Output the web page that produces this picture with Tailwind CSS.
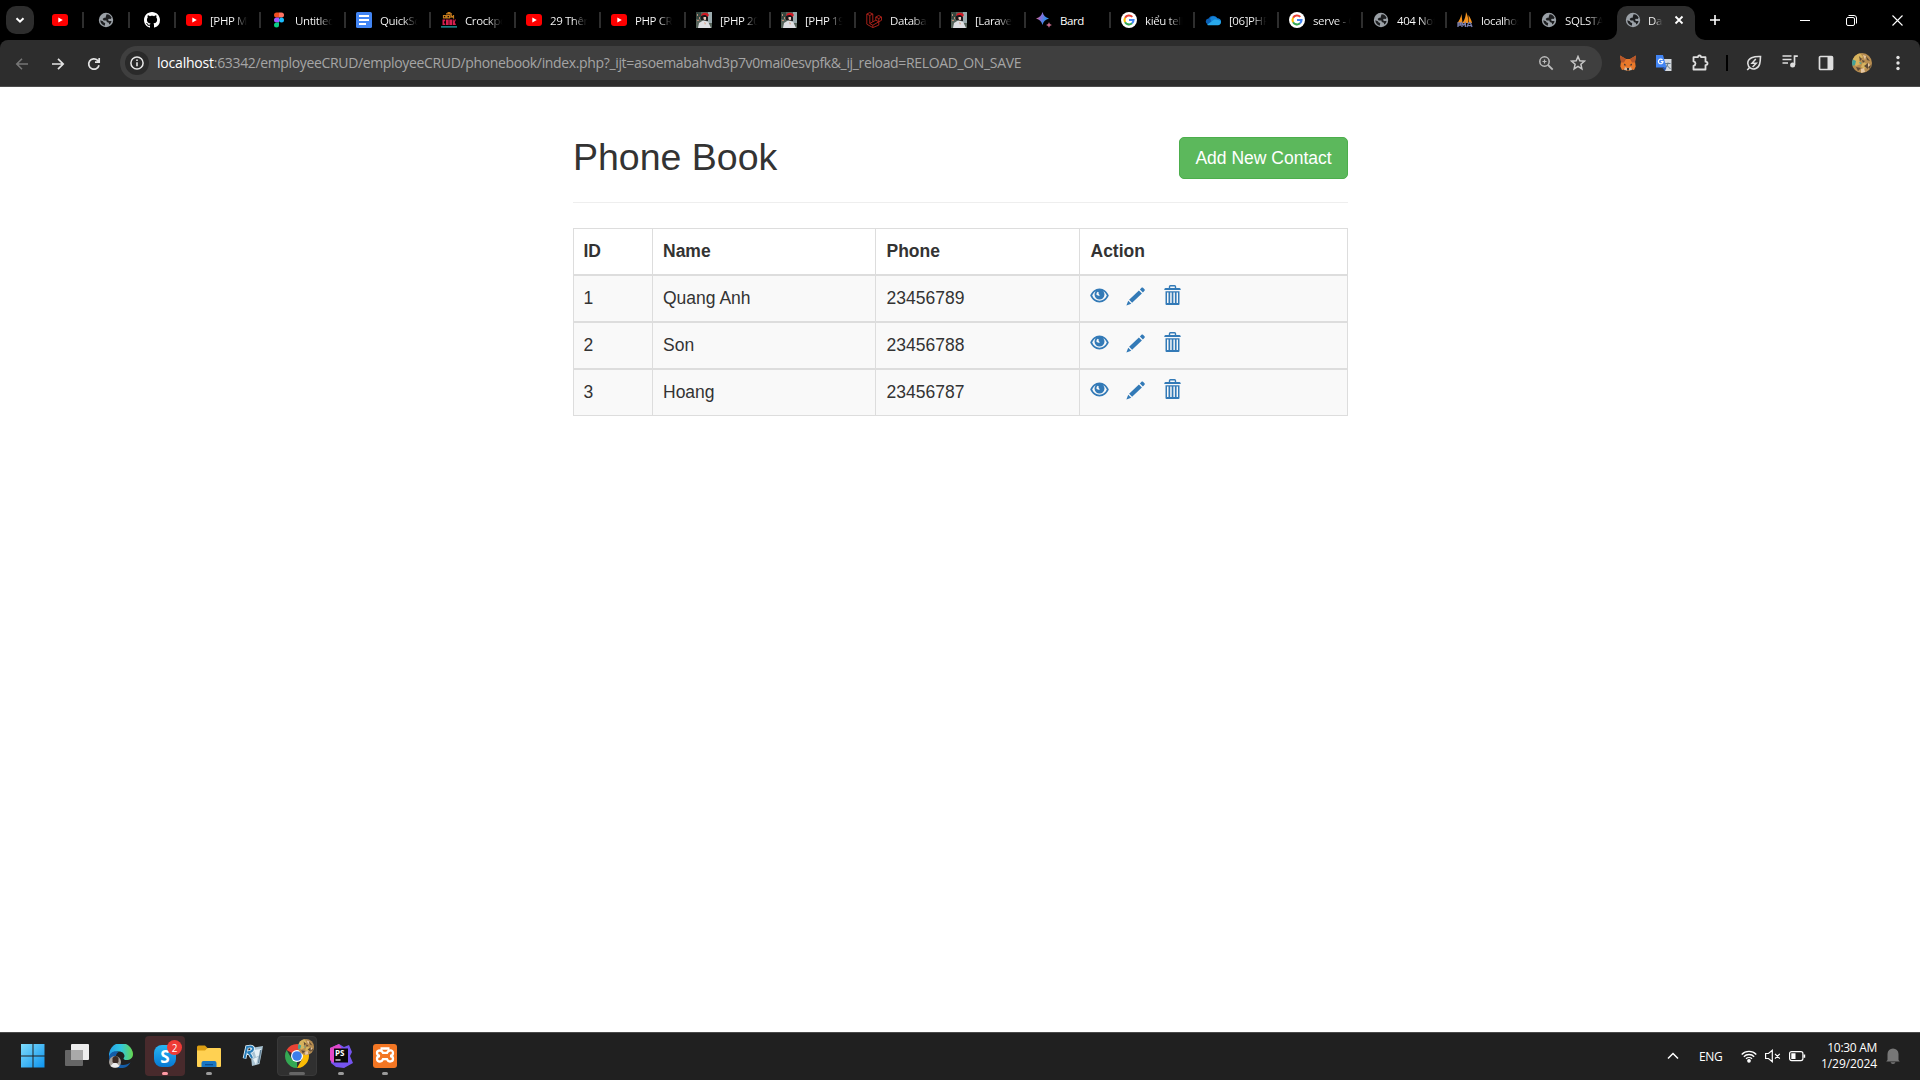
<!DOCTYPE html>
<html lang="en">
<head>
<meta charset="utf-8">
<title>Dashboard</title>
<script src="https://cdn.jsdelivr.net/npm/@tailwindcss/browser@4"></script>
</head>
<body class="w-[1920px] h-[1080px] overflow-hidden bg-white flex flex-col font-['Open_Sans','Noto_Sans',sans-serif]">

<svg class="absolute size-0" xmlns="http://www.w3.org/2000/svg">
  <symbol id="youtube" viewBox="0 0 16 16"><rect y="2" width="16" height="12" rx="3" fill="#f00"/><path d="M6.3 5.4v5.2L10.8 8z" fill="#fff"/></symbol>
  <symbol id="globe" viewBox="0 0 16 16"><circle cx="8" cy="8" r="7.2" fill="#9aa0a6"/><path d="M8.6 2.2c2.5.2 4.2 1.600 5 3.600l-1 1.200-1.700-.2-.8.8.6 1.300h2.800c-.2 1.700-1.200 3-2.300 3.700l-.4-1.900-2-.7-.4-1.500H5.700L4.600 7l1.500-1.300h1.500l.3-1.400zM2.300 8.300l2.600 1 .8 1.300 1.500.5-.4 2.700C4.200 13.200 2.300 11 2.300 8.300z" fill="#1d1e20"/></symbol>
  <symbol id="github" viewBox="0 0 16 16"><path fill="#fff" d="M8 0C3.580 0 0 3.580 0 8c0 3.540 2.290 6.530 5.470 7.590.4.07.55-.17.55-.38 0-.19-.01-.82-.01-1.490-2.010.37-2.530-.49-2.690-.94-.09-.23-.48-.94-.82-1.130-.28-.15-.68-.52-.01-.53.63-.01 1.080.58 1.230.82.72 1.210 1.870.87 2.330.66.07-.52.28-.87.51-1.070-1.780-.2-3.640-.89-3.640-3.950 0-.87.31-1.590.82-2.150-.08-.2-.36-1.020.08-2.120 0 0 .67-.21 2.200.82.64-.18 1.320-.27 2-.27s1.360.09 2 .27c1.530-1.040 2.200-.82 2.200-.82.44 1.100.16 1.920.08 2.120.51.56.82 1.270.82 2.150 0 3.070-1.870 3.750-3.650 3.950.29.25.54.73.54 1.480 0 1.070-.01 1.930-.01 2.200 0 .21.15.46.55.38A8.010 8.010 0 0 0 16 8c0-4.420-3.580-8-8-8z"/></symbol>
  <symbol id="figma" viewBox="0 0 16 16"><path d="M8 .5H5.500a2.500 2.500 0 0 0 0 5H8z" fill="#f24e1e"/><path d="M8 .5h2.500a2.500 2.500 0 0 1 0 5H8z" fill="#ff7262"/><path d="M8 5.500H5.500a2.500 2.500 0 0 0 0 5H8z" fill="#a259ff"/><circle cx="10.500" cy="8" r="2.500" fill="#1abcfe"/><path d="M8 10.500H5.500A2.500 2.500 0 1 0 8 13z" fill="#0acf83"/></symbol>
  <symbol id="docs" viewBox="0 0 16 16"><rect width="16" height="16" rx="1.500" fill="#4285f4"/><path d="M3 4h10M3 8h10M3 12h7" stroke="#fff" stroke-width="1.800"/></symbol>
  <symbol id="cook" viewBox="0 0 16 16"><path d="M5 1.800h6M6.500.6h3M2.500 3.500h2.300v2.300H2.500zM6 3.500h2.500v2.300H6zM10 6V3.300l2.500 2.500V3" fill="none" stroke="#c67c1d" stroke-width="1.200"/><path d="M1.500 7.500h2.700v1.700H3.200v2.300h1.100V13H1.500zM5 7.500h2.700V13H5zM8.300 7.500H11V13H8.300zM11.600 7.500h1.200v2l1-2H15l-1.200 2.800L15 13h-3.400z" fill="#d51f4f"/><path d="M0 14.900h16" fill="none" stroke="#27b0b8" stroke-width="1.200"/></symbol>
  <symbol id="photo" viewBox="0 0 16 16"><rect width="16" height="16" fill="#56635a"/><path d="M0 0h5v7H0z" fill="#354740"/><path d="M12 0h4v11h-4z" fill="#9babae"/><path d="M1 2h1v2H1zM3 5h1v2H3zM1 8h2v1H1z" fill="#b78c78"/><path d="M5 8V4l3-2 4 2v5z" fill="#19171b"/><path d="M5 4c.5-4 6-4.500 8-1l-1.500 2C10 2.500 8 2.500 5 4z" fill="#d31722"/><path d="M7.500 5h2.500v2.500L9 8.500 7.500 7z" fill="#ecc9ba"/><path d="M2 16l1-5 4-2.500 5 1 3 6.500z" fill="#dedfe3"/><path d="M8 10l2 1-1 2z" fill="#d7a891"/></symbol>
  <symbol id="laravel" viewBox="0 0 16 16"><path d="M.8 2l3-1.400 3 1.400v7.800l3-1.600V5l3-1.500 2.700 1.500v3.300l-2.700 1.500v3.300L6.800 15.600l-6-3.400zM.8 2l3 1.500L6.800 2M3.800 3.500v8l3 1.700 6-3.400-3-1.600M6.800 9.800l-3 1.700M9.800 5l3 1.600L15.500 5M12.800 6.600v3.200M6.800 13.200v2.400" fill="none" stroke="#b7241c" stroke-width=".9"/></symbol>
  <linearGradient id="bardFill" x1="0" y1="0" x2="1" y2=".4"><stop offset=".1" stop-color="#e36b66"/><stop offset=".45" stop-color="#8b6fd8"/><stop offset=".8" stop-color="#3a8be9"/></linearGradient>
  <symbol id="bard" viewBox="0 0 16 16"><path d="M6.500 0C7.600 3.700 9.300 5.400 13 6.500 9.300 7.600 7.600 9.300 6.500 13 5.400 9.300 3.700 7.600 0 6.500 3.700 5.400 5.400 3.700 6.500 0z" fill="url(#bardFill)"/><path d="M13 10c.5 1.800 1.200 2.500 3 3-1.800.5-2.500 1.200-3 3-.5-1.800-1.200-2.500-3-3 1.800-.5 2.500-1.200 3-3z" fill="#c76b8c"/></symbol>
  <symbol id="google" viewBox="0 0 16 16"><circle cx="8" cy="8" r="8" fill="#fff"/><g fill="none" stroke-width="2.100"><path d="M4.100 5.800A4.500 4.500 0 0 1 11.300 4.900" stroke="#ea4335"/><path d="M4.100 10.200a4.500 4.500 0 0 1 0-4.400" stroke="#fbbc05"/><path d="M11 11.300a4.500 4.500 0 0 1-6.900-1.100" stroke="#34a853"/><path d="M8 8h4.500a4.500 4.500 0 0 1-1.500 3.300" stroke="#4285f4"/></g></symbol>
  <symbol id="onedrive" viewBox="0 0 16 16"><path d="M3 12.500a3 3 0 0 1 .5-5.900 5 5 0 0 1 9-.1 3 3 0 0 1 .5 6z" fill="#0a5fb4"/><path d="M5 6a5 5 0 0 1 7.500.5A3 3 0 0 1 16 9.500L7 11z" fill="#1483d8"/><path d="M2 12.700l7-4.900c2.500-.8 4.500.2 6.700 1.200.8 1.800-.5 4.200-2.700 4.200H3z" fill="#28a8ea"/></symbol>
  <symbol id="pma" viewBox="0 0 16 16"><path d="M.5 11C2.500 8 4 5 4.500 2l1 9zM5.500 11C8 7 8.800 4 9 0c2 4 2.500 7 2 11zM11.500 3c2 3 3 5.500 3.500 8h-3.300z" fill="#f4921e"/><path d="M1 15v-4h2.500v2H1M5 15v-4l1.700 2 1.700-2v4M10 15l1.500-4h2l1.500 4M10.700 13.600h3.500" fill="none" stroke="#7a80b0" stroke-width="1.300"/></symbol>
  <symbol id="avatar" viewBox="0 0 20 20"><path fill="#b78d50" d="M0 0h20v20H0z"/><path fill="#d7b35d" d="M2 2l6-2 3 4-4 3 2 4-5 2-4-3zM11 9l4 2-2 5-4-2z"/><path fill="#5e4a36" d="M7 3l3 3-2 2zM14 3l4 5-3-1zM4 14l5 1-3 3zM12 13l4-3v6zM10 7l3 1-2 2zM16 14l3-2-1 4z"/><path fill="#42a29a" d="M0 6l4 2-1 4-3 1zM7 9l3 1-2 1z"/><path fill="#e6c8a5" d="M11 2l3 1-1 4zM9 16l3-1 1 4-4 1zM16 10l2 2-2 2z"/></symbol>

  <symbol id="eye" viewBox="0 0 19 15"><path fill="#337ab7" fill-rule="evenodd" d="M9.500.5c4.300 0 7.500 3.200 9.300 7-1.800 3.800-5 7-9.300 7s-7.500-3.200-9.300-7C2 3.700 5.200.500 9.500.5zM5.700 3.300C4.200 4.200 3 5.800 2.200 7.500c1.400 3.200 4 5.200 7.300 5.200s5.900-2 7.300-5.200c-.8-1.700-2-3.300-3.500-4.200a5 5 0 1 1-7.600 0zM7.900 3.800c-1.200.5-1.700 1.800-1.300 3.200l2.800 1c.4-1.200-.1-1.800-1-2.300.7-.5.500-1.500-.5-1.900z"/></symbol>
  <symbol id="pencil" viewBox="0 0 19 19"><path fill="#337ab7" d="M15.500.800c.5-.5 1-.5 1.500 0l1.500 1.500c.5.5.5 1 0 1.500l-1.600 1.600-3-3zM12.900 3.400l3 3-9.800 9.400-3-3zM2.200 13.700l3.100 3-4.900 1.700z"/></symbol>
  <symbol id="trash" viewBox="0 0 17 20"><path fill="none" stroke="#337ab7" d="M5.500 3V1.700q0-.9.900-.9h4.200q.9 0 .9.900V3" stroke-width="1.400"/><path fill="#337ab7" d="M.300 4.600q0-1.200 1.200-1.500h14q1.200.3 1.200 1.500v.4H.3z"/><path fill="#337ab7" fill-rule="evenodd" d="M1.500 6.200h14V19q0 1-1 1h-12q-1 0-1-1zM3 7.500V18h1.500V7.500zm3.200 0V18h1.500V7.500zm3.200 0V18h1.500V7.500zm3.200 0V18H14V7.500z"/></symbol>
</svg>

<!-- Tab strip -->
<header class="h-10 bg-black flex shrink-0 text-white">
  <div class="w-[38px] h-10 pt-1.5 pl-1.5 shrink-0">
    <div class="size-7 rounded-[10px] bg-[#2d2d2d] flex items-center justify-center">
      <svg class="size-3" viewBox="0 0 12 12"><path d="M2.500 4.200 6 7.700l3.500-3.500" fill="none" stroke="#fff" stroke-width="2"/></svg>
    </div>
  </div>
  <div id="tabs" class="flex shrink-0"></div>
  <div class="relative w-[78px] h-[34px] mt-1.5 ml-0.5 bg-[#2d2d2d] rounded-t-[10px] flex items-center pl-2 shrink-0">
    <svg class="absolute -left-2.5 bottom-0 size-2.5" viewBox="0 0 10 10"><path d="M10 0v10H0A10 10 0 0 0 10 0z" fill="#2d2d2d"/></svg>
    <svg class="absolute -right-2.5 bottom-0 size-2.5" viewBox="0 0 10 10"><path d="M0 0v10h10A10 10 0 0 1 0 0z" fill="#2d2d2d"/></svg>
    <svg class="size-4 -mt-1.5"><use href="#globe"/></svg>
    <span class="ml-[7px] -mt-[5px] w-[15px] overflow-hidden text-[11.5px] whitespace-nowrap bg-linear-to-r from-white from-40% to-[#2d2d2d] bg-clip-text text-transparent tracking-[-0.4px]">Dashboard</span>
    <svg class="ml-2.5 -mt-1.5 size-3" viewBox="0 0 12 12"><path d="m2.500 2.500 7 7m0-7-7 7" stroke="#fff" stroke-width="1.800"/></svg>
  </div>
  <svg class="ml-3.5 mt-3.5 size-3 shrink-0" viewBox="0 0 12 12"><path d="M6 1v10M1 6h10" stroke="#fff" stroke-width="1.600"/></svg>
  <div class="ml-auto flex">
    <div class="w-[46px] flex items-center justify-center"><div class="w-2.5 h-px bg-white"></div></div>
    <div class="w-[46px] flex items-center justify-center"><svg class="size-[11px]" viewBox="0 0 11 11" fill="none" stroke="#fff"><rect x=".5" y="2.500" width="8" height="8" rx="1.500"/><path d="M2.500.500H8A2.500 2.500 0 0 1 10.500 3v5.500"/></svg></div>
    <div class="w-[46px] flex items-center justify-center"><svg class="size-[11px]" viewBox="0 0 11 11"><path d="m.5.5 10 10m0-10-10 10" stroke="#fff" stroke-width="1.100"/></svg></div>
  </div>
</header>

<!-- Toolbar -->
<div class="h-[47px] shrink-0 bg-black">
<div class="h-[47px] bg-[#2d2d2d] border-b border-[#4c4c4c] rounded-t-lg flex items-center pl-4">
  <svg class="size-3.5 mt-px -ml-px" viewBox="0 0 14 14"><path d="M13 7H2m5-5.200L1.800 7 7 12.200" fill="none" stroke="#767676" stroke-width="1.600"/></svg>
  <svg class="size-3.5 mt-px ml-[22px]" viewBox="0 0 14 14"><path d="M1 7h11M7 1.800 12.200 7 7 12.200" fill="none" stroke="#e3e3e3" stroke-width="1.700"/></svg>
  <svg class="size-3.5 mt-px ml-[22px]" viewBox="0 0 14 14"><path d="M12 8.200A5.200 5.200 0 1 1 10.600 3.300L12 4.700M12.200 1v4.200H8" fill="none" stroke="#e3e3e3" stroke-width="1.700"/></svg>
  <div class="ml-[19px] w-[1482px] h-[34px] rounded-full bg-[#3f3f3f] flex items-center pl-[5px] shrink-0">
    <div class="size-6 rounded-full bg-[#2a2a2a] flex items-center justify-center shrink-0">
      <svg class="size-3.5" viewBox="0 0 14 14"><circle cx="7" cy="7" r="6.100" fill="none" stroke="#e8e8e8" stroke-width="1.500"/><path d="M7 6.300v4M7 3.500v1.500" stroke="#e8e8e8" stroke-width="1.600"/></svg>
    </div>
    <div class="ml-2 text-sm whitespace-nowrap text-[#a5a5a5] tracking-[-0.35px]"><span class="text-white tracking-[-0.2px]">localhost</span>:63342/employeeCRUD/employeeCRUD/phonebook/index.php?_ijt=asoemabahvd3p7v0mai0esvpfk&amp;_ij_reload=RELOAD_ON_SAVE</div>
    <svg class="ml-auto size-4 shrink-0" viewBox="0 0 16 16" fill="none" stroke="#bcbcbc"><circle cx="6.500" cy="6.500" r="4.700" stroke-width="1.500"/><path d="m10 10 4.700 4.700" stroke-width="1.800"/><path d="M6.500 4.500v4m-2-2h4" stroke-width="1.200"/></svg>
    <svg class="ml-4 mr-4 size-4 shrink-0" viewBox="0 0 16 16"><path d="m8 1.500 1.800 4.300 4.600.4-3.500 3.100 1 4.600L8 11.400l-3.900 2.500 1-4.600-3.500-3.100 4.600-.4z" fill="none" stroke="#c7c7c7" stroke-width="1.500"/></svg>
  </div>
  <svg class="ml-[18px] size-4" viewBox="0 0 16 16"><path d="m0 .5 6 3.500h4l6-3.500-1 6 .7 5-1.700 3.500-3.500-.8L9.500 15.500h-3l-1-1.300L2 15 .3 11.500 1 6.500z" fill="#e9782a"/><path d="m0 .5 6 3.500-2 3.500H1zM16 .5 10 4l2 3.500h3z" fill="#b6562a"/><path d="m4 8.500 2.500 1.700-2.200.2zM12 8.500 9.500 10.200l2.200.2zM6 13h4l-.5 2h-3z" fill="#2e3037"/><path d="m5 12 2 1v2.500L4 15zM11 12l-2 1v2.500l3-.5z" fill="#d8b99c"/></svg>
  <svg class="ml-5 size-4" viewBox="0 0 16 16"><path d="M7 4h8.500v12H9z" fill="#d6dadf"/><path d="M9 8.500h5.500M12 7.500v1q-.5 3-3 4.500M10 9.500l4.500 4.500" fill="none" stroke="#637b8e"/><path d="M0 0h7l3.500 12.500H0z" fill="#4285f4"/><path d="m6 12.500h4.500L9 16z" fill="#2455b4"/><path d="M6.500 5A2.300 2.300 0 1 0 7 6.700H4.800" fill="none" stroke="#fff" stroke-width="1.200"/></svg>
  <svg class="ml-5 size-[17px] -mt-0.5" viewBox="0 0 17 17"><path d="M1.500 3.200H5.800Q6.200 1.500 7.500 1.500t1.700 1.700h4.300v4.500q2 .2 2 1.700t-2 1.700v4.400H1.500v-3.700q2-.4 2-2.200t-2-2.200z" fill="none" stroke="#dedede" stroke-width="1.800" stroke-linejoin="round"/></svg>
  <div class="ml-[17px] w-0.5 h-4 bg-black"></div>
  <svg class="ml-[18px] size-4" viewBox="0 0 16 16" fill="none" stroke="#dedede"><path d="M14.500 1.500C8 1.200 1.500 3 1.800 8.500c.3 4.500 4.500 6.300 8 5 4.200-1.500 4.500-6.500 4.700-12zM1.200 15l2.500-2.500" stroke-width="1.600"/><path d="M9.800 4 6 8.300h4.200L6.600 12" stroke-width="1.500"/></svg>
  <svg class="ml-5 size-4 -mt-1" viewBox="0 0 16 16"><path d="M.5 3h9M.5 6.500h9M.5 10h5.500M12.500 12V3.200h3.300" fill="none" stroke="#dedede" stroke-width="1.700"/><circle cx="10.600" cy="12" r="2.500" fill="#dedede"/></svg>
  <svg class="ml-5 size-4" viewBox="0 0 16 16"><rect x="1.500" y="1.500" width="13" height="13" rx="1" fill="none" stroke="#dedede" stroke-width="1.700"/><path d="M9.500 1.500h5v13h-5z" fill="#dedede"/></svg>
  <svg class="ml-[18px] size-5 rounded-full"><use href="#avatar"/></svg>
  <svg class="ml-[18px] w-4 h-4" viewBox="0 0 16 16" fill="#e3e3e3"><circle cx="8" cy="2.500" r="1.700"/><circle cx="8" cy="8" r="1.700"/><circle cx="8" cy="13.500" r="1.700"/></svg>
</div>
</div>

<!-- Page -->
<main class="grow w-[775px] ml-[573px] pt-[50px] font-['Liberation_Sans',Arial,sans-serif] text-[17.5px] leading-[25px] text-[#333]">
  <div class="flex justify-between border-b border-[#eee] h-[66px]">
    <h2 class="text-[37.5px] leading-[41px] font-medium">Phone Book</h2>
    <a class="h-[42px] w-[169px] rounded-[5px] bg-[#5cb85c] border border-[#4cae4c] text-white flex items-center justify-center">Add New Contact</a>
  </div>
  <div id="contacts" class="mt-[25px] border border-[#ddd] bg-[#ddd] flex flex-col gap-0.5">
    <div class="grid grid-cols-[78px_222px_203px_267px] gap-px font-bold">
      <div class="h-[45px] px-[9.5px] pt-[10px] bg-white">ID</div>
      <div class="h-[45px] px-[10px] pt-[10px] bg-white">Name</div>
      <div class="h-[45px] px-[10.5px] pt-[10px] bg-white">Phone</div>
      <div class="h-[45px] px-[10.5px] pt-[10px] bg-white">Action</div>
    </div>
  </div>
</main>

<!-- Taskbar -->
<footer class="h-12 shrink-0 bg-[#202020] border-t border-[#4a4a4a] flex text-white">
  <div class="ml-[11px] mt-[3px] flex">
    <div class="w-11 h-10 flex items-center justify-center"><svg class="size-6" viewBox="0 0 24 24"><linearGradient id="win" x1="0" y1="0" x2="1" y2="1"><stop stop-color="#7fdcfb"/><stop offset="1" stop-color="#0c93ee"/></linearGradient><path d="M0 0h11.500v11.500H0zM12.500 0H23.500v11.500h-11zM0 12.500h11.500v11H0zM12.500 12.500h11v11h-11z" fill="url(#win)"/></svg></div>
    <div class="w-11 h-10 flex items-center justify-center"><svg class="size-6" viewBox="0 0 24 24"><rect x="6" y="0" width="18" height="16" rx="1" fill="#ededed"/><rect y="6" width="18" height="16" rx="1" fill="#666"/><path d="M6 6h12v10H6z" fill="#a9a9a9"/></svg></div>
    <div class="w-11 h-10 flex items-center justify-center"><svg class="size-6" viewBox="0 0 24 24"><linearGradient id="edge" x1="0" x2="1"><stop stop-color="#249fe6"/><stop offset=".5" stop-color="#31c6df"/><stop offset="1" stop-color="#66d74d"/></linearGradient><path d="M0 12A12 12 0 0 1 24 10c0 4-3 6-6.500 6-3 0-3.500-1.500-2.500-2.500 1.500-2-.5-6-5-6-5 0-9 2.500-10 6z" fill="url(#edge)"/><path d="M0 13c1-5 6-7 9.500-5C6 10 6 16 9 19c3.500 3.500 9 2 12.500-.5C19 23 15 24.500 11 24 4 23.500 0 18 0 13z" fill="#145da8"/><circle cx="6" cy="18" r="6" fill="#a8a19b"/><path d="M3.500 14q3-4 6 0v4q-3 4-6 0z" fill="#3a2a24"/><path d="m1.500 22 3-3h3l3 3q-4 3-9 0z" fill="#eee"/></svg></div>
    <div class="w-11 h-10 flex justify-center"><div class="relative size-10 rounded bg-[#482a2c] flex items-center justify-center">
      <div class="size-[22px] rounded-[8px] bg-linear-to-b from-[#29b5f3] to-[#0878d4] flex items-center justify-center text-[17px] font-bold leading-none">S</div>
      <div class="absolute left-[22px] top-1 size-[15px] rounded-full bg-[#ef3b36] flex items-center justify-center text-[10px] leading-none">2</div>
      <div class="absolute left-[17px] bottom-px w-1.5 h-[3px] rounded-full bg-[#ff99a4]"></div></div></div>
    <div class="relative w-11 h-10 flex items-center justify-center"><svg class="size-6" viewBox="0 0 24 24"><path d="M0 3q0-1.500 1.500-1.500H8L10.500 4v4H0z" fill="#dc9e12"/><path d="M0 6.500h8L10.500 4H23q1 0 1 1v17q0 1-1 1H1q-1 0-1-1z" fill="#ffd152"/><path d="M4.500 23v-4q0-2 2-2h11q2 0 2 2v4z" fill="#1976c2"/><path d="M8 20h8v1.300H8z" fill="#0a4e91"/></svg><div class="absolute bottom-px w-1.5 h-[3px] rounded-full bg-[#9a9a9a]"></div></div>
    <div class="w-11 h-10 flex items-center justify-center"><svg class="size-6" viewBox="0 0 24 24"><path d="m9 4 13-2-3.500 18-7.500 2z" fill="#a9c3d2"/><path d="m13 6 7-1-1 6-4 2zM12 15l5-2-2 8z" fill="#e5f0f6"/><path d="m19 6 1.500 0-2.500 13-1 0z" fill="#607e94"/><g fill="none"><path id="letter" d="M3.500 14.500 6 3q6.500-1.500 6 2-.5 3-5.500 3.200 3 1.500 4.500 5.800" stroke="#eaf5fb" stroke-width="3.600"/><path d="M3.500 14.500 6 3q6.500-1.500 6 2-.5 3-5.500 3.200 3 1.500 4.500 5.800" stroke="#267cb8" stroke-width="2"/></g></svg></div>
    <div class="w-11 h-10 flex justify-center"><div class="relative size-10 rounded bg-[#303030] border border-[#393939] flex items-center justify-center">
      <svg class="size-6" viewBox="0 0 24 24"><path d="M12 12 1.610 6A12 12 0 0 1 22.390 6H12z" fill="#ea4335"/><path d="M12 12 12 24A12 12 0 0 1 1.610 6L6.800 15z" fill="#34a853"/><path d="M12 24A12 12 0 0 0 22.390 6H12l5.200 9z" fill="#fbbc05"/><circle cx="12" cy="12" r="6" fill="#fff"/><circle cx="12" cy="12" r="4.800" fill="#3c7eea"/></svg>
      <svg class="absolute left-5 top-0.5 size-4 rounded-full"><use href="#avatar"/></svg>
      <div class="absolute bottom-0 w-4 h-[3px] rounded-full bg-[#666]"></div></div></div>
    <div class="relative w-11 h-10 flex items-center justify-center"><svg class="size-6" viewBox="0 0 24 24"><path d="m1 4 9-4 5 3 5-2 3 7-2 4 3 7-9 5-8-1-5-4z" fill="#7554f0"/><path d="m1 4 9-4 3 5-9 14-3-3z" fill="#e249c8"/><path d="M5 4.500h14v14H5z" fill="#090909"/><path d="M6.500 16h5" stroke="#fff" stroke-width="1.200"/><text x="6" y="12" fill="#fff" font-size="8" font-weight="700">PS</text></svg><div class="absolute bottom-px w-1.5 h-[3px] rounded-full bg-[#9a9a9a]"></div></div>
    <div class="relative w-11 h-10 flex items-center justify-center"><svg class="size-6" viewBox="0 0 24 24"><rect width="24" height="24" rx="3" fill="#f37623"/><path d="M7.500 4.500h9M7 6.500q-3 0-3 2.600T7 12q-3 0-3 2.800t3 2.700q2 0 3-2.300h4q1 2.300 3 2.300 3 0 3-2.700T17 12q3 0 3-2.900t-3-2.600q-2 0-3 2.300h-4Q9 6.500 7 6.500z" fill="none" stroke="#fff" stroke-width="2.300"/></svg><div class="absolute bottom-px w-1.5 h-[3px] rounded-full bg-[#9a9a9a]"></div></div>
  </div>
  <div class="ml-auto mb-px flex items-center text-xs">
    <svg class="size-3" viewBox="0 0 12 12"><path d="m1 8.500 5-5 5 5" fill="none" stroke="#fff" stroke-width="1.500"/></svg>
    <span class="ml-5 w-6 mt-px text-xs tracking-[-0.3px]">ENG</span>
    <svg class="ml-[18px] size-4" viewBox="0 0 16 16" fill="none" stroke="#fff" stroke-width="1.300"><path d="M.700 6.500a10.300 10.300 0 0 1 14.600 0M2.800 8.700a7.300 7.300 0 0 1 10.400 0M5 10.800a4.300 4.300 0 0 1 6 0"/><circle cx="8" cy="12.800" r="1.200" fill="#fff"/></svg>
    <svg class="ml-2 size-4" viewBox="0 0 16 16" fill="none" stroke="#fff" stroke-width="1.200"><path d="M.600 5.500H3.500L7.300 2.300v11.400L3.500 10.500H.600zM10 5.800l4.800 4.800m0-4.800L10 10.600"/></svg>
    <svg class="ml-2 w-[17px] h-4" viewBox="0 0 17 16"><rect x=".6" y="3.600" width="13.300" height="9" rx="2" fill="none" stroke="#fff" stroke-width="1.200"/><path d="M2.300 5.300h4.200v5.600H2.300zM14.500 6.500h1.700v3.300h-1.700z" fill="#fff"/></svg>
    <div class="ml-3 w-[59px] flex flex-col items-end leading-4 whitespace-nowrap text-xs tracking-[-0.3px]"><span>10:30 AM</span><span class="tracking-[-0.1px]">1/29/2024</span></div>
    <svg class="ml-2 mr-[19px] size-4" viewBox="0 0 16 16" fill="#777"><path d="M2.500 12V6a5.500 5.500 0 0 1 11 0v6l1.300 1.500H1.200zM5.500 14.300h5Q10 16 8 16t-2.500-1.700z"/></svg>
  </div>
</footer>

<script>
  // Pinned tabs carry only an icon; the others add a clipped title.
  const tabs = [
    ['youtube', ''], ['globe', ''], ['github', ''],
    ['youtube', '[PHP MVC'], ['figma', 'Untitled'], ['docs', 'QuickSort'], ['cook', 'Crockpot'],
    ['youtube', '29 Thêm'], ['youtube', 'PHP CRUD'], ['photo', '[PHP 20]'], ['photo', '[PHP 19]'],
    ['laravel', 'Database'], ['photo', '[Laravel]'], ['bard', 'Bard'], ['google', 'kiểu tell'],
    ['onedrive', '[06]PHP'], ['google', 'serve - G'], ['globe', '404 Not'], ['pma', 'localhost'], ['globe', 'SQLSTATE'],
  ];
  const strip = document.getElementById('tabs');
  tabs.forEach(([icon, title], i) => {
    const size = i < 3 ? 'w-[46px] pl-3.5' : i < 14 ? 'w-[85px] pl-[10px]' : 'w-[84px] pl-[10px]';
    const rule = i === tabs.length - 1 ? '' : 'border-r-2 border-[#2e2e2e]';
    const text = title === 'Bard' ? 'text-white' : 'bg-linear-to-r from-white from-60% to-black bg-clip-text text-transparent';
    strip.insertAdjacentHTML('beforeend', `
      <div class="${size} ${rule} h-4 mt-3 flex items-center">
        <svg class="size-4 shrink-0"><use href="#${icon}"/></svg>
        ${title ? `<span class="ml-2 mt-0.5 w-[39px] shrink-0 overflow-hidden whitespace-nowrap text-[11.5px] leading-4 tracking-[-0.4px] ${text}">${title}</span>` : ''}
      </div>`);
  });

  const contacts = [[1, 'Quang Anh', '23456789'], [2, 'Son', '23456788'], [3, 'Hoang', '23456787']];
  const table = document.getElementById('contacts');
  contacts.forEach(([id, name, phone]) => {
    table.insertAdjacentHTML('beforeend', `
      <div class="grid grid-cols-[78px_222px_203px_267px] gap-px">
        <div class="h-[45px] px-[9.5px] pt-[10px] bg-[#f9f9f9]">${id}</div>
        <div class="h-[45px] px-[10px] pt-[10px] bg-[#f9f9f9]">${name}</div>
        <div class="h-[45px] px-[10.5px] pt-[10px] bg-[#f9f9f9]">${phone}</div>
        <div class="h-[45px] px-[10px] pt-[9px] bg-[#f9f9f9] flex items-start">
          <svg class="w-[19px] h-[15px] mt-[3px]"><use href="#eye"/></svg>
          <svg class="w-[19px] h-[19px] ml-[17px] mt-0.5"><use href="#pencil"/></svg>
          <svg class="w-[17px] h-5 ml-[19px]"><use href="#trash"/></svg>
        </div>
      </div>`);
  });
</script>
</body>
</html>
